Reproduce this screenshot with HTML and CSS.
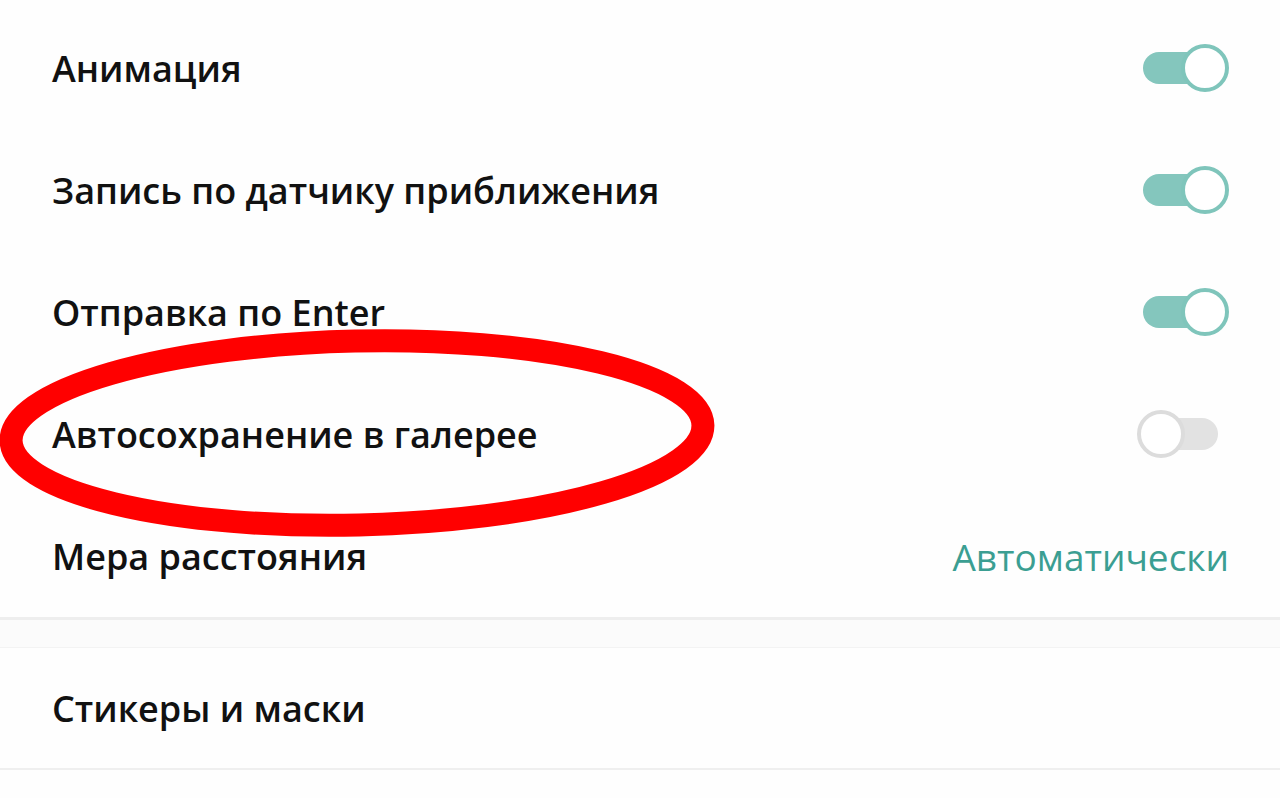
FILE: index.html
```html
<!DOCTYPE html>
<html lang="ru">
<head>
    <meta charset="UTF-8">
    <meta name="viewport" content="width=device-width, initial-scale=1.0">
    <title>Настройки</title>
    <link rel="stylesheet" href="styles.css">
</head>
<body>
    <div class="settings">
        <section class="group">
            <div class="row">
                <span class="label">Анимация</span>
                <span class="switch on"><span class="knob"></span></span>
            </div>
            <div class="row">
                <span class="label">Запись по датчику приближения</span>
                <span class="switch on"><span class="knob"></span></span>
            </div>
            <div class="row">
                <span class="label">Отправка по Enter</span>
                <span class="switch on"><span class="knob"></span></span>
            </div>
            <div class="row">
                <span class="label">Автосохранение в галерее</span>
                <span class="switch"><span class="knob"></span></span>
            </div>
            <div class="row">
                <span class="label">Мера расстояния</span>
                <span class="value">Автоматически</span>
            </div>
        </section>
        <div class="gap"></div>
        <section class="group last">
            <div class="row">
                <span class="label">Стикеры и маски</span>
            </div>
        </section>
    </div>

    <!-- hand-drawn marker circle -->
    <svg class="marker" width="1280" height="798" viewBox="0 0 1280 798">
        <ellipse cx="357" cy="433" rx="346" ry="92" fill="none" stroke="#ff0000" stroke-width="23" transform="rotate(-1.3 357 433)"/>
    </svg>
</body>
</html>
```

FILE: styles.css
```css
body {
    margin: 0;
    padding: 0;
    background-color: #fefefe;
    font-family: "Open Sans", "Noto Sans", sans-serif;
    color: #111;
    overflow: hidden;
}
.settings {
    padding-top: 7px;
}
.group {
    background-color: #fefefe;
}
.row {
    box-sizing: border-box;
    height: 122px;
    display: flex;
    align-items: center;
    justify-content: space-between;
    padding: 0 52px 0 52px;
}
.label {
    font-size: 36px;
    font-weight: 600;
}
.value {
    font-size: 37px;
    color: #3b9e92;
    margin-right: -1px;
}
.gap {
    height: 27px;
    background-color: #fbfbfb;
    border-top: 3px solid #eeeeee;
}
.group.last {
    border-top: 1px solid #f3f3f3;
    border-bottom: 2px solid #efefef;
}
.group.last .row {
    height: 120px;
}
.switch {
    position: relative;
    width: 75px;
    height: 32px;
    border-radius: 16px;
    background-color: #e2e2e2;
    margin-right: 10px;
}
.switch.on {
    background-color: #84c6bd;
}
.knob {
    position: absolute;
    top: -8px;
    left: -6px;
    width: 40px;
    height: 40px;
    border-radius: 50%;
    background-color: #fff;
    border: 4px solid #dcdcdc;
}
.switch.on .knob {
    left: auto;
    right: -11px;
    border-color: #7fc5bb;
}
.marker {
    position: absolute;
    top: 0;
    left: 0;
    pointer-events: none;
}
```
